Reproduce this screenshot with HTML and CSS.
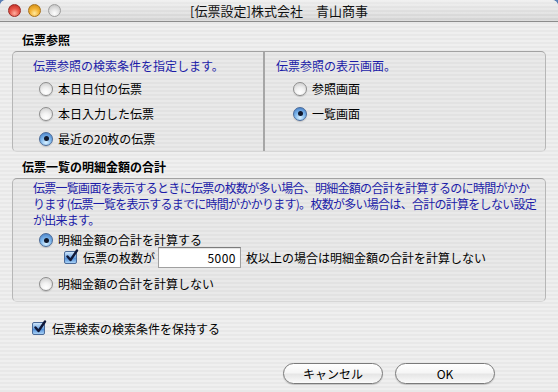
FILE: index.html
```html
<!DOCTYPE html>
<html lang="ja">
<head>
    <meta charset="UTF-8">
    <title>伝票設定</title>
    <link rel="stylesheet" href="styles.css">
</head>
<body>
    <div class="window">
        <div class="titlebar">
            <div class="lights">
                <span class="light red"></span>
                <span class="light yellow"></span>
                <span class="light off"></span>
            </div>
            <div class="title">[伝票設定]株式会社　青山商事</div>
            <div></div>
        </div>

        <div class="content">
            <h2 class="heading">伝票参照</h2>
            <div class="group split">
                <div class="pane left">
                    <p class="note">伝票参照の検索条件を指定します。</p>
                    <label class="opt"><span class="radio"></span>本日日付の伝票</label>
                    <label class="opt"><span class="radio"></span>本日入力した伝票</label>
                    <label class="opt"><span class="radio on"></span>最近の20枚の伝票</label>
                </div>
                <div class="pane right">
                    <p class="note">伝票参照の表示画面。</p>
                    <label class="opt"><span class="radio"></span>参照画面</label>
                    <label class="opt"><span class="radio on"></span>一覧画面</label>
                </div>
            </div>

            <h2 class="heading second">伝票一覧の明細金額の合計</h2>
            <div class="group total">
                <p class="note long">伝票一覧画面を表示するときに伝票の枚数が多い場合、明細金額の合計を計算するのに時間がかか<br>ります(伝票一覧を表示するまでに時間がかかります)。枚数が多い場合は、合計の計算をしない設定<br>が出来ます。</p>
                <label class="opt row-a"><span class="radio on"></span>明細金額の合計を計算する</label>
                <div class="limit">
                    <span class="check"><svg width="15" height="15" viewBox="0 0 15 15"><path d="M3.5 7.5 L6.5 11 L13 1.5" fill="none" stroke="#101838" stroke-width="2.4" stroke-linecap="round" stroke-linejoin="round"/></svg></span>
                    <span class="limit-label">伝票の枚数が</span>
                    <input class="num" type="text" value="5000">
                    <span>枚以上の場合は明細金額の合計を計算しない</span>
                </div>
                <label class="opt row-b"><span class="radio"></span>明細金額の合計を計算しない</label>
            </div>

            <label class="keep"><span class="check"><svg width="15" height="15" viewBox="0 0 15 15"><path d="M3.5 7.5 L6.5 11 L13 1.5" fill="none" stroke="#101838" stroke-width="2.4" stroke-linecap="round" stroke-linejoin="round"/></svg></span>伝票検索の検索条件を保持する</label>

            <div class="buttons">
                <button class="btn">キャンセル</button>
                <button class="btn">OK</button>
            </div>
        </div>
    </div>
</body>
</html>
```

FILE: styles.css
```css
html {
    background: #5b7fb5;
}
body {
    margin: 0;
    font-family: "Noto Sans CJK JP", "DejaVu Sans", sans-serif;
    font-size: 12px;
    color: #000;
}
.window {
    width: 558px;
    height: 392px;
    overflow: hidden;
    border-radius: 6px 6px 0 0;
    background: repeating-linear-gradient(#efefef 0 2px, #e8e8e8 2px 4px);
}
.titlebar {
    height: 21px;
    display: grid;
    grid-template-columns: 1fr auto 1fr;
    align-items: center;
    border-bottom: 1px solid #8c8c8c;
    background: repeating-linear-gradient(rgba(255,255,255,0.25) 0 2px, rgba(0,0,0,0) 2px 4px),
                linear-gradient(#ececec, #d2d2d2);
}
.lights {
    display: flex;
    gap: 7px;
    padding-left: 8px;
}
.light {
    width: 13px;
    height: 13px;
    border-radius: 50%;
    box-sizing: border-box;
}
.red {
    border: 1px solid #9a2a24;
    background: radial-gradient(circle at 50% 75%, #ffb0a0 0, #e8574a 45%, #b8231c 100%);
}
.yellow {
    border: 1px solid #a8721a;
    background: radial-gradient(circle at 50% 75%, #ffe9a0 0, #f4b436 45%, #c9860e 100%);
}
.off {
    border: 1px solid #9c9c9c;
    background: radial-gradient(circle at 50% 75%, #ffffff 0, #e0e0e0 50%, #b8b8b8 100%);
}
.title {
    font-size: 13px;
    color: #111;
    white-space: nowrap;
}
.content {
    padding: 0 12px;
}
.heading {
    margin: 10px 0 2px 10px;
    font-size: 12px;
    font-weight: bold;
    line-height: 16px;
    height: 17px;
}
.heading.second {
    margin-top: 7px;
}
.group {
    box-sizing: border-box;
    border: 1px solid #b6b6b6;
    border-top-color: #a2a2a2;
    border-bottom-color: #d6d6d6;
    border-radius: 5px;
    background: rgba(0,0,0,0.025);
}
.split {
    height: 101px;
    display: grid;
    grid-template-columns: 250px 1fr;
}
.pane {
    padding-top: 6px;
}
.pane.left {
    padding-left: 20px;
}
.pane.right {
    padding-left: 11px;
    border-left: 2px solid #a6a6a6;
}
.note {
    margin: 0;
    color: #1c1ca8;
    line-height: 16px;
    white-space: nowrap;
}
.opt {
    display: flex;
    align-items: center;
    gap: 5px;
    height: 25px;
    line-height: 16px;
}
.pane.left .opt {
    padding-left: 6px;
}
.pane.left .note + .opt {
    margin-top: 2px;
}
.pane.right .note + .opt {
    margin-top: 2px;
}
.pane.right .opt {
    padding-left: 17px;
}
.radio {
    position: relative;
    width: 14px;
    height: 14px;
    box-sizing: border-box;
    border-radius: 50%;
    border: 1px solid #8e8e8e;
    background: radial-gradient(circle at 50% 80%, #ffffff 0, #f2f2f2 40%, #c8c8c8 100%);
    box-shadow: 0 1px 1px rgba(0,0,0,0.15);
}
.radio.on {
    border-color: #4a6a98;
    background: radial-gradient(circle at 50% 80%, #d8f0ff 0, #80b8ec 45%, #3b74c0 100%);
}
.radio.on::after {
    content: "";
    position: absolute;
    left: 3.5px;
    top: 3.5px;
    width: 5px;
    height: 5px;
    border-radius: 50%;
    background: #10182c;
}
.total {
    height: 124px;
    padding: 1px 0 0 20px;
}
.note.long {
    letter-spacing: -0.72px;
}
.total .opt {
    height: 18px;
    padding-left: 6px;
}
.row-a {
    margin-top: 3px;
}
.row-b {
    margin-top: 7px;
}
.limit {
    display: flex;
    align-items: center;
    height: 21px;
    margin-top: -2px;
    padding-left: 31px;
}
.check {
    position: relative;
    width: 13px;
    height: 13px;
    box-sizing: border-box;
    border: 1px solid #4a6a98;
    border-radius: 2px;
    background: linear-gradient(#cfe6fb, #6fa6e4 50%, #4d8bd6 55%, #a9d2f6);
    flex: none;
}
.check svg {
    position: absolute;
    left: -1px;
    top: -3px;
}
.limit-label {
    margin-left: 6px;
}
.num {
    width: 83px;
    height: 21px;
    box-sizing: border-box;
    margin: 0 5px 0 3px;
    padding: 0 4px 0 0;
    border: 1px solid #a0a0a0;
    border-top-color: #7c7c7c;
    background: #fff;
    box-shadow: inset 0 1px 1px rgba(0,0,0,0.12);
    font-family: "Noto Sans CJK JP", "DejaVu Sans", sans-serif;
    font-size: 12px;
    text-align: right;
    letter-spacing: 0.5px;
    color: #000;
}
.keep {
    display: flex;
    align-items: center;
    gap: 7px;
    height: 18px;
    margin-top: 17px;
    padding-left: 20px;
}
.buttons {
    display: flex;
    justify-content: flex-end;
    gap: 12px;
    margin-top: 26px;
    padding-right: 51px;
}
.btn {
    width: 100px;
    height: 21px;
    border: 1px solid #7a7a7a;
    border-radius: 11px;
    background: linear-gradient(#ffffff, #f6f6f6 45%, #e6e6e6 55%, #fbfbfb);
    box-shadow: 0 1px 1px rgba(0,0,0,0.18);
    font-family: "Noto Sans CJK JP", "DejaVu Sans", sans-serif;
    font-size: 12px;
    color: #000;
    padding: 0;
}
```
